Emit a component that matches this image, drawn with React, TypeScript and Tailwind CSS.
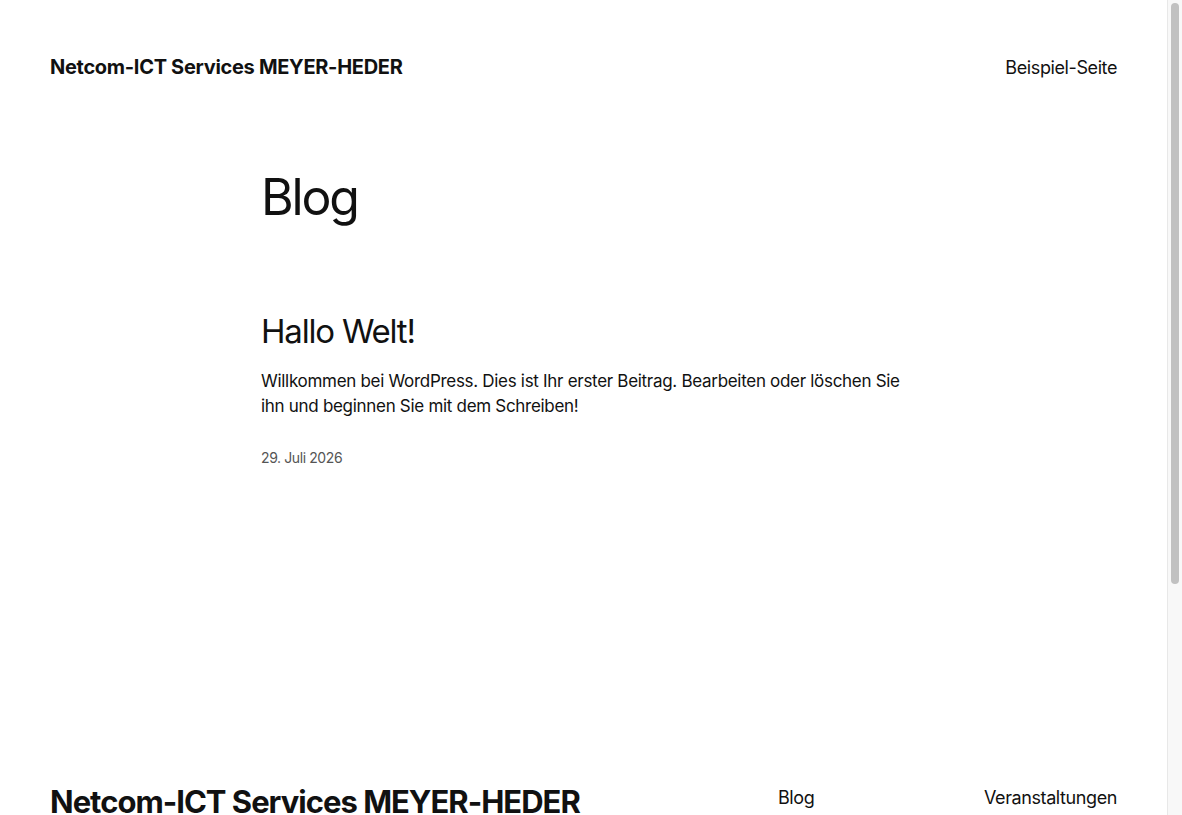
import React from 'react'

const font = { fontFamily: 'Inter, "Noto Sans", sans-serif' }

const Scrollbar: React.FC = () => (
  <div className="w-[15px] shrink-0 border-l border-[#e8e8e8] bg-[#f8f8f8] px-[3px] pt-[3px]">
    <div className="h-[581px] w-full rounded-full bg-[#c1c1c1]" />
  </div>
)

const App: React.FC = () => {
  return (
    <div className="flex h-screen overflow-hidden bg-white text-[#111111]" style={font}>
      <div className="min-w-0 flex-1">
        <header className="flex h-[134px] items-center justify-between px-[50px]">
          <a className="text-[20px] font-bold tracking-[-0.3px]">Netcom-ICT Services MEYER-HEDER</a>
          <nav className="text-[18px] tracking-[-0.4px]">
            <a>Beispiel-Seite</a>
          </nav>
        </header>

        <main className="mx-auto w-[645px] pb-[315px]">
          <h1 className="mt-[33px] text-[50px] leading-[1.2] tracking-[-2.2px]">Blog</h1>

          <article className="mt-[85px]">
            <h2 className="text-[33px] leading-[1.2] tracking-[-1.2px]">Hallo Welt!</h2>
            <p className="mt-[17px] text-[17px] leading-[25px] tracking-[-0.3px]">
              Willkommen bei WordPress. Dies ist Ihr erster Beitrag. Bearbeiten oder löschen Sie ihn und beginnen
              Sie mit dem Schreiben!
            </p>
            <div className="mt-[28px] text-[14px] tracking-[-0.4px] text-[#555555]">29. Juli 2026</div>
          </article>
        </main>

        <footer className="px-[50px] pb-[50px]">
          <div className="flex justify-between">
            <div>
              <div className="text-[31px] font-bold leading-[1.2] tracking-[-1px]">Netcom-ICT Services MEYER-HEDER</div>
              <div className="mt-[10px] text-[17px]">Eine weitere WordPress-Website</div>
            </div>
            <div className="flex pt-[1px] text-[18px] tracking-[-0.4px]">
              <div className="flex w-[206px] flex-col gap-[8px]">
                <a>Blog</a>
                <a>Über uns</a>
                <a>FAQs</a>
                <a>Autoren</a>
              </div>
              <div className="flex flex-col gap-[8px]">
                <a>Veranstaltungen</a>
                <a>Shop</a>
                <a>Muster</a>
                <a>Themes</a>
              </div>
            </div>
          </div>
          <div className="mt-[60px] text-[14px] text-[#555555]">Gestaltet mit WordPress</div>
        </footer>
      </div>
      <Scrollbar />
    </div>
  )
}

export default App
